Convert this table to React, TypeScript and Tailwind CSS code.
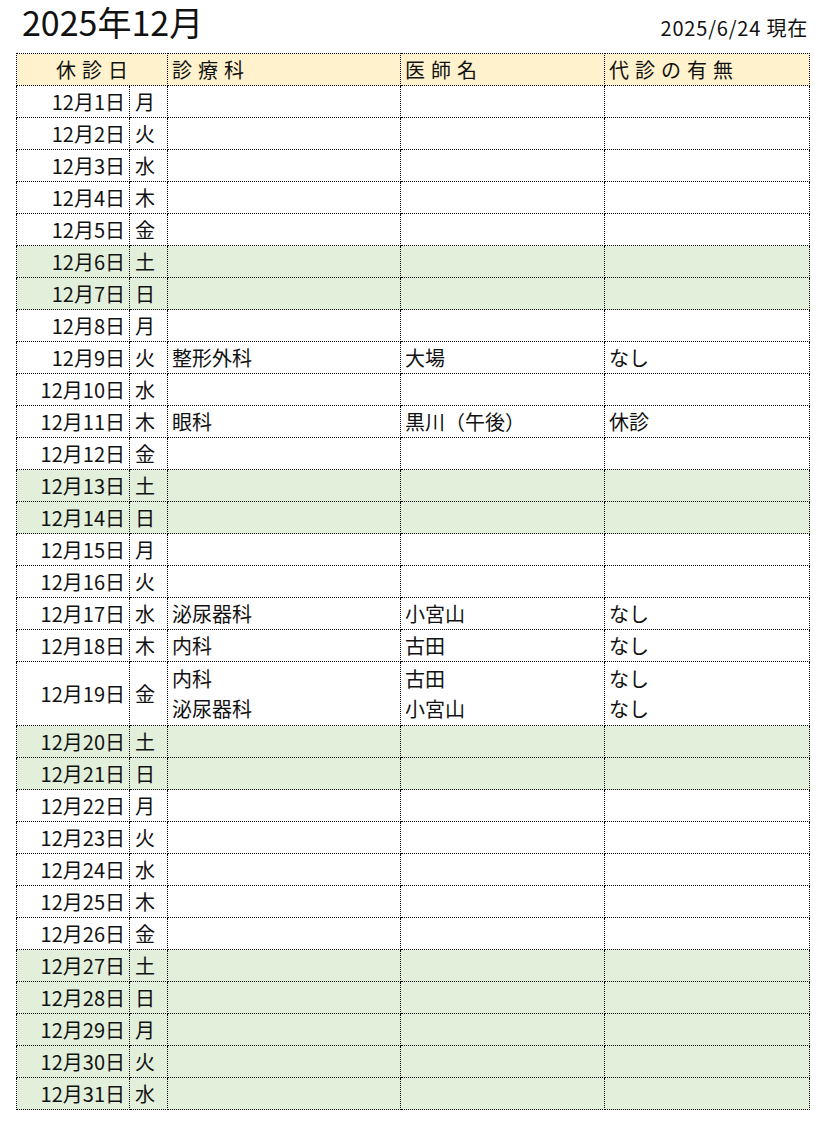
const DAYS = ["月", "火", "水", "木", "金", "土", "日"];

// 12/1/2025 is a Monday
const GREEN = new Set([6, 7, 13, 14, 20, 21, 27, 28, 29, 30, 31]);

type Entry = { dept: string; doctor: string; sub: string };

const ENTRIES: Record<number, Entry[]> = {
  9: [{ dept: "整形外科", doctor: "大場", sub: "なし" }],
  11: [{ dept: "眼科", doctor: "黒川（午後）", sub: "休診" }],
  17: [{ dept: "泌尿器科", doctor: "小宮山", sub: "なし" }],
  18: [{ dept: "内科", doctor: "古田", sub: "なし" }],
  19: [
    { dept: "内科", doctor: "古田", sub: "なし" },
    { dept: "泌尿器科", doctor: "小宮山", sub: "なし" },
  ],
};

const cell = "border border-dotted border-black p-0";

export default function App() {
  const days = Array.from({ length: 31 }, (_, i) => i + 1);

  return (
    <div
      className="w-[826px] h-[1126px] bg-white text-[#111] px-[16px]"
      style={{ fontFamily: '"Noto Sans CJK JP", "Noto Sans", sans-serif' }}
    >
      {/* Title row */}
      <div className="flex items-end justify-between h-[53px] pb-[12px]">
        <div className="text-[34px] leading-[38px] pl-[6px] whitespace-nowrap">2025年12月</div>
        <div className="text-[20px] leading-[28px] pr-[2px] mb-[-1px] tracking-[0.8px] whitespace-nowrap">
          2025/6/24 現在
        </div>
      </div>

      <table className="border-collapse table-fixed w-[793px] text-[20px] leading-none">
        <colgroup>
          <col className="w-[113px]" />
          <col className="w-[38px]" />
          <col className="w-[233px]" />
          <col className="w-[204px]" />
          <col className="w-[205px]" />
        </colgroup>
        <thead>
          <tr className="h-[32px] bg-[#fff2cc]">
            <th colSpan={2} className={`${cell} font-normal text-center tracking-[6px] pl-[6px]`}>
              休診日
            </th>
            <th className={`${cell} font-normal text-left pl-[4px] tracking-[6px]`}>診療科</th>
            <th className={`${cell} font-normal text-left pl-[4px] tracking-[6px]`}>医師名</th>
            <th className={`${cell} font-normal text-left pl-[4px] tracking-[6px]`}>代診の有無</th>
          </tr>
        </thead>
        <tbody>
          {days.map((d) => {
            const entries = ENTRIES[d] ?? [];
            const bg = GREEN.has(d) ? "bg-[#e2efda]" : "bg-white";
            const h = entries.length > 1 ? "h-[64px]" : "h-[32px]";
            return (
              <tr key={d} className={`${bg} ${h}`}>
                <td className={`${cell} text-right pr-[4px]`}>12月{d}日</td>
                <td className={`${cell} text-left pl-[5px]`}>{DAYS[(d - 1) % 7]}</td>
                <td className={`${cell} pl-[4px]`}>
                  <Lines items={entries.map((e) => e.dept)} />
                </td>
                <td className={`${cell} pl-[4px]`}>
                  <Lines items={entries.map((e) => e.doctor)} />
                </td>
                <td className={`${cell} pl-[4px]`}>
                  <Lines items={entries.map((e) => e.sub)} />
                </td>
              </tr>
            );
          })}
        </tbody>
      </table>
    </div>
  );
}

function Lines({ items }: { items: string[] }) {
  return (
    <div className="flex flex-col">
      {items.map((t, i) => (
        <div key={i} className="h-[30px] flex items-center">
          {t}
        </div>
      ))}
    </div>
  );
}
